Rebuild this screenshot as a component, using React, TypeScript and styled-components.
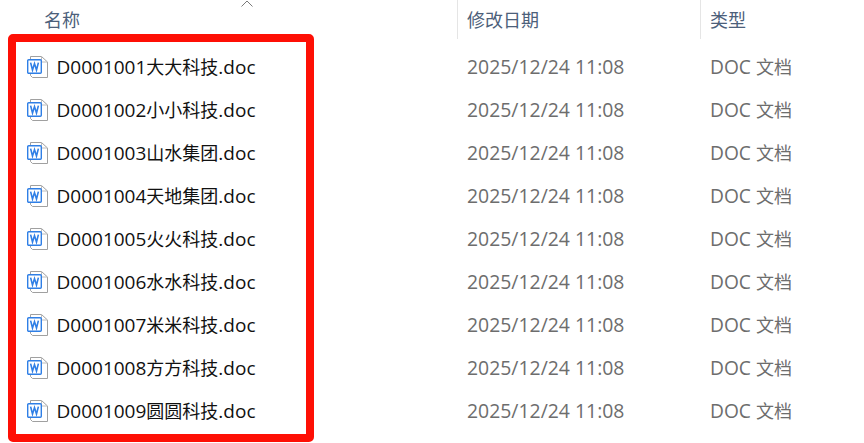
import React from "react";
import styled, { createGlobalStyle } from "styled-components";

const GlobalStyle = createGlobalStyle`
  html, body {
    margin: 0;
    padding: 0;
    background: #ffffff;
  }
`;

const Page = styled.div`
  position: relative;
  width: 864px;
  height: 443px;
  overflow: hidden;
  background: #ffffff;
  font-family: "Noto Sans CJK SC", sans-serif;
  font-size: 18px;
`;

const Header = styled.div`
  display: grid;
  grid-template-columns: 457px 243px 1fr;
  height: 39px;
`;

const HeaderCell = styled.div<{ $divider?: boolean }>`
  position: relative;
  display: flex;
  align-items: center;
  padding-left: ${(p) => (p.$divider ? "9px" : "44px")};
  padding-bottom: 2px;
  border-left: ${(p) => (p.$divider ? "1px solid #e5e5e5" : "none")};
  color: #4c607a;
`;

const SortArrow = styled.svg`
  position: absolute;
  left: 240px;
  top: 0;
`;

const Rows = styled.div`
  display: flex;
  flex-direction: column;
  padding-top: 6px;
`;

const Row = styled.div`
  display: grid;
  grid-template-columns: 458px 243px 1fr;
  align-items: center;
  height: 43px;
  line-height: 24px;
`;

const NameCell = styled.div`
  display: flex;
  align-items: center;
  gap: 7.5px;
  padding-left: 27px;
  color: #111111;
`;

const MetaCell = styled.div`
  padding-left: 9px;
  color: #6d6d6d;
`;

const Latin = styled.span<{ $size?: number }>`
  font-family: "Open Sans", sans-serif;
  font-size: ${(p) => p.$size ?? 19}px;
`;

const IconSlot = styled.span`
  display: flex;
`;

const Highlight = styled.div`
  position: absolute;
  left: 8px;
  top: 34px;
  width: 306px;
  height: 408px;
  box-sizing: border-box;
  border: 8px solid #fe0f05;
  border-radius: 5px;
`;

const DocIcon = () => (
  <svg width="22" height="24" viewBox="0 0 22 24" fill="none">
    <path d="M3.5 4V1.5H14.5L20.5 7V22.5H5.5L3.5 20.5V18" stroke="#a0a0a0" />
    <path d="M14.5 1.5V7H20.5" stroke="#bcbcbc" />
    <rect x="0.7" y="4.7" width="13.6" height="13.6" rx="1" fill="#ffffff" stroke="#2f7fe6" strokeWidth="1.4" />
    <path d="M3.6 7.6L5.5 15L7.5 8.6L9.5 15L11.4 7.6" stroke="#2f7fe6" strokeWidth="1.6" />
  </svg>
);

const files = [
  ["D0001001", "大大科技"],
  ["D0001002", "小小科技"],
  ["D0001003", "山水集团"],
  ["D0001004", "天地集团"],
  ["D0001005", "火火科技"],
  ["D0001006", "水水科技"],
  ["D0001007", "米米科技"],
  ["D0001008", "方方科技"],
  ["D0001009", "圆圆科技"],
];

export default function App() {
  return (
    <Page>
      <GlobalStyle />
      <Header>
        <HeaderCell>
          名称
          <SortArrow width="14" height="8" viewBox="0 0 14 8" fill="none">
            <path d="M1.5 6.5L7 1L12.5 6.5" stroke="#7a7a7a" />
          </SortArrow>
        </HeaderCell>
        <HeaderCell $divider>修改日期</HeaderCell>
        <HeaderCell $divider>类型</HeaderCell>
      </Header>
      <Rows>
        {files.map(([code, company]) => (
          <Row key={code}>
            <NameCell>
              <IconSlot>
                <DocIcon />
              </IconSlot>
              <span>
                <Latin>{code}</Latin>
                {company}
                <Latin>.doc</Latin>
              </span>
            </NameCell>
            <MetaCell>
              <Latin $size={19.4}>2025/12/24 11:08</Latin>
            </MetaCell>
            <MetaCell>
              <Latin $size={19.2}>DOC </Latin>文档
            </MetaCell>
          </Row>
        ))}
      </Rows>
      <Highlight />
    </Page>
  );
}
